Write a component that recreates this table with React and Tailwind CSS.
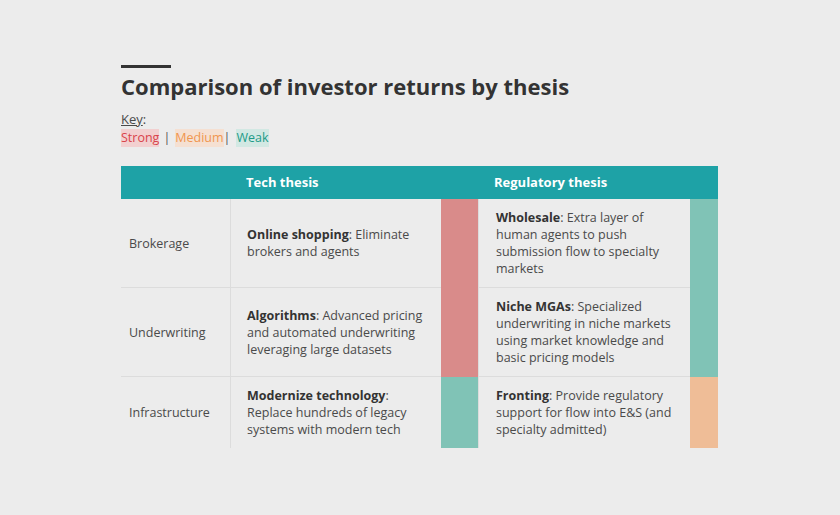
import React from "react";

const rows = [
  {
    label: "Brokerage",
    tech: { bold: "Online shopping", text: ": Eliminate brokers and agents" },
    techColor: "bg-[#d98b8a]",
    reg: {
      bold: "Wholesale",
      text: ": Extra layer of human agents to push submission flow to specialty markets",
    },
    regColor: "bg-[#80c3b6]",
  },
  {
    label: "Underwriting",
    tech: {
      bold: "Algorithms",
      text: ": Advanced pricing and automated underwriting leveraging large datasets",
    },
    techColor: "bg-[#d98b8a]",
    reg: {
      bold: "Niche MGAs",
      text: ": Specialized underwriting in niche markets using market knowledge and basic pricing models",
    },
    regColor: "bg-[#80c3b6]",
  },
  {
    label: "Infrastructure",
    tech: {
      bold: "Modernize technology",
      text: ": Replace hundreds of legacy systems with modern tech",
    },
    techColor: "bg-[#80c3b6]",
    reg: {
      bold: "Fronting",
      text: ": Provide regulatory support for flow into E&S (and specialty admitted)",
    },
    regColor: "bg-[#efbd97]",
  },
];

export default function App() {
  return (
    <div className="w-[840px] h-[515px] bg-[#ececec] font-['Open_Sans',sans-serif] text-[#4a4a4a]">
      <div className="pl-[121px] pt-[65px]">
        <div className="w-[50px] h-[3px] bg-[#333]" />
        <h1 className="mt-[3px] text-[22px] leading-[30px] font-bold text-[#333]">
          Comparison of investor returns by thesis
        </h1>
        <div className="mt-[10px] text-[13px] leading-[17px]">
          <span className="underline">Key</span>:
        </div>
        <div className="mt-[1px] text-[12.5px] leading-[18px] flex items-center">
          <span className="bg-[#f2d0d0] text-[#d9434b]">Strong</span>
          <span className="ml-[4px] mr-[5px] text-[#555]">|</span>
          <span className="bg-[#f5e0d2] text-[#f0964f]">Medium</span>
          <span className="mr-[6px] text-[#555]">|</span>
          <span className="bg-[#d2e8e3] text-[#1c9b87]">Weak</span>
        </div>

        <div className="mt-[19px] w-[597px] grid grid-cols-[109px_211px_37px_212px_28px] text-[12.5px] leading-[17px]">
          <div className="col-span-5 h-[33px] bg-[#1ea2a6] grid grid-cols-[109px_211px_37px_212px_28px] items-center text-[13px] text-white font-bold">
            <div />
            <div className="pl-[16px]">Tech thesis</div>
            <div />
            <div className="pl-[16px]">Regulatory thesis</div>
            <div />
          </div>
          {rows.map((r, i) => {
            const last = i === rows.length - 1;
            const b = last ? "" : "border-b border-[#dcdcdc]";
            return (
              <React.Fragment key={r.label}>
                <div className={`flex items-center pl-[8px] ${b}`}>{r.label}</div>
                <div className={`flex items-center pl-[16px] pr-[8px] py-[10px] border-l border-[#dcdcdc] ${b}`}>
                  <p>
                    <b className="text-[#333]">{r.tech.bold}</b>
                    {r.tech.text}
                  </p>
                </div>
                <div className={r.techColor} />
                <div className={`flex items-center pl-[17px] pr-[10px] py-[10px] border-l border-[#dcdcdc] ${b}`}>
                  <p>
                    <b className="text-[#333]">{r.reg.bold}</b>
                    {r.reg.text}
                  </p>
                </div>
                <div className={r.regColor} />
              </React.Fragment>
            );
          })}
        </div>
      </div>
    </div>
  );
}
